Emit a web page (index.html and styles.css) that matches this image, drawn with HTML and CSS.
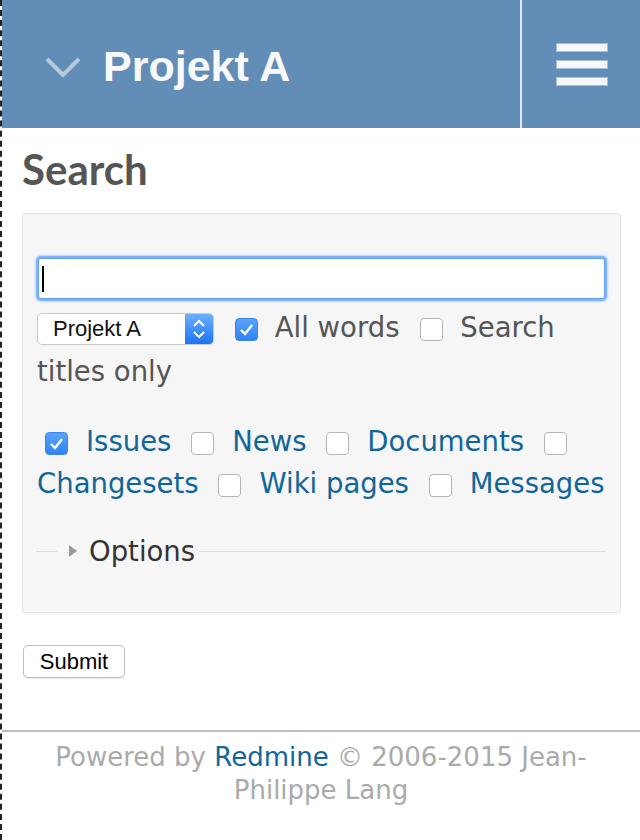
FILE: index.html
```html
<!DOCTYPE html>
<html lang="de">
<head>
<meta charset="utf-8">
<title>Search - Projekt A</title>
<link rel="stylesheet" href="styles.css">
</head>
<body>
<div class="page">
  <header class="topbar">
    <div class="project">
      <svg class="chevron" width="36" height="22" viewBox="0 0 36 22" aria-hidden="true">
        <polyline points="2,3 18,19 34,3" fill="none" stroke="#b7c9dc" stroke-width="4"/>
      </svg>
      <span class="project-name">Projekt A</span>
    </div>
    <div class="menu-toggle">
      <span class="bar"></span>
      <span class="bar"></span>
      <span class="bar"></span>
    </div>
  </header>

  <main class="content">
    <h2 class="title">Search</h2>
    <form class="search-box">
      <div class="query"><span class="caret"></span></div>
      <p class="scope"><span class="select"><span class="select-text">Projekt A</span><span class="select-arrows"><svg width="14" height="22" viewBox="0 0 14 22" aria-hidden="true"><polyline points="2,8 7,3 12,8" fill="none" stroke="#fff" stroke-width="2"/><polyline points="2,14 7,19 12,14" fill="none" stroke="#fff" stroke-width="2"/></svg></span></span> <span class="cb checked first"><svg width="15" height="13" viewBox="0 0 15 13" aria-hidden="true"><polyline points="2,7 6,11 13,2" fill="none" stroke="#fff" stroke-width="2.4"/></svg></span>All words <span class="cb"></span>Search titles only</p>
      <p class="types"><span class="cb checked first"><svg width="15" height="13" viewBox="0 0 15 13" aria-hidden="true"><polyline points="2,7 6,11 13,2" fill="none" stroke="#fff" stroke-width="2.4"/></svg></span><a class="type-link">Issues</a> <span class="cb"></span><a class="type-link">News</a> <span class="cb"></span><a class="type-link">Documents</a> <span class="cb"></span><a class="type-link">Changesets</a> <span class="cb"></span><a class="type-link">Wiki pages</a> <span class="cb"></span><a class="type-link">Messages</a></p>
      <div class="options">
        <span class="rule-start"></span>
        <span class="legend"><span class="triangle"></span>Options</span>
        <span class="rule-end"></span>
      </div>
    </form>
    <button class="submit" type="button">Submit</button>
  </main>

  <footer class="footer">
    <p class="footer-text">Powered by <a class="footer-link">Redmine</a> © 2006-2015 Jean-Philippe Lang</p>
  </footer>
</div>
</body>
</html>
```

FILE: styles.css
```css
html, body {
  margin: 0;
  padding: 0;
  background: #fff;
}

.page {
  min-height: 840px;
  border-left: 2px dashed #222;
  box-sizing: border-box;
  font-family: "DejaVu Sans", Verdana, sans-serif;
}

/* Header */
.topbar {
  display: flex;
  height: 128px;
  background: #628db6;
}

.project {
  flex: 1;
  display: flex;
  align-items: center;
  padding-left: 43px;
  border-right: 2px solid #dde6ef;
}

.chevron {
  display: block;
  margin-top: 5px;
}

.project-name {
  margin-left: 22px;
  margin-top: 5px;
  font-family: "Liberation Sans", Arial, sans-serif;
  font-weight: bold;
  font-size: 43px;
  color: #f8f9fb;
}

.menu-toggle {
  width: 116px;
  display: flex;
  flex-direction: column;
  align-items: center;
  justify-content: center;
  gap: 10px;
  padding-left: 2px;
}

.bar {
  display: block;
  width: 50px;
  height: 7px;
  background: #f7f8fa;
  box-shadow: 0 0 0 1px rgba(210, 222, 236, 0.6);
}

/* Content */
.content {
  padding: 0 19px 0 20px;
}

.title {
  margin: 0;
  padding-top: 21px;
  height: 85px;
  box-sizing: border-box;
  font-family: "Lato", "Open Sans", sans-serif;
  font-weight: bold;
  font-size: 42px;
  line-height: 40px;
  color: #555;
}

.search-box {
  margin: 0;
  background: #f6f6f6;
  border: 1px solid #e2e2e2;
  border-radius: 3px;
  padding: 44px 14px 46px 14px;
  font-size: 27.5px;
  color: #555;
}

.query {
  height: 41px;
  margin: 0 1px;
  box-sizing: border-box;
  background: #fff;
  border: 1px solid #5ea1f2;
  border-radius: 3px;
  box-shadow: 0 0 0 2px #80b4f5, 0 0 2px 3px rgba(150, 192, 246, 0.6);
  display: flex;
  align-items: center;
  padding-left: 3px;
}

.caret {
  display: block;
  width: 2px;
  height: 26px;
  background: #000;
}

.scope {
  margin: 6px 0 0 0;
  line-height: 44px;
}

.select {
  display: inline-flex;
  vertical-align: middle;
  width: 177px;
  height: 32px;
  box-sizing: border-box;
  border: 1px solid #c9c9c9;
  border-radius: 5px;
  background: #fff;
  overflow: hidden;
  font-family: "Liberation Sans", Arial, sans-serif;
  font-size: 22px;
  color: #111;
  line-height: 30px;
}

.select-text {
  flex: 1;
  padding-left: 15px;
}

.select-arrows {
  width: 28px;
  display: flex;
  align-items: center;
  justify-content: center;
  background: linear-gradient(#6db0fb, #1d73f6);
}

.cb {
  display: inline-block;
  width: 23px;
  height: 23px;
  box-sizing: border-box;
  margin: 0 18px 0 11px;
  vertical-align: -4px;
  border: 1px solid #b5b5b5;
  border-radius: 4px;
  background: #fff;
}

.cb svg {
  display: block;
  margin: 4px auto 0 auto;
}

.scope .cb {
  margin: 0 17px 0 12px;
}

.scope .cb.first {
  margin-left: 12px;
}

.cb.checked {
  border: 1px solid #3a88ef;
  background: linear-gradient(#5aa3f8, #2f84f4);
}

.types {
  margin: 27px 0 0 0;
  line-height: 42px;
}

.types .cb.first {
  margin-left: 8px;
}

.type-link {
  color: #169;
  text-decoration: none;
}

.options {
  display: flex;
  align-items: center;
  height: 30px;
  margin-top: 32px;
}

.rule-start {
  width: 21px;
  margin-left: -1px;
  border-top: 1px solid #dcdcdc;
}

.rule-end {
  flex: 1;
  border-top: 1px solid #dcdcdc;
  margin-left: 4px;
}

.legend {
  display: flex;
  align-items: center;
  padding-left: 12px;
  color: #333;
  line-height: 30px;
}

.triangle {
  width: 0;
  height: 0;
  border-top: 6px solid transparent;
  border-bottom: 6px solid transparent;
  border-left: 8px solid #9a9a9a;
  margin-right: 12px;
}

.submit {
  display: block;
  margin: 32px 0 0 1px;
  width: 102px;
  height: 33px;
  padding: 0;
  background: #fff;
  border: 1px solid #bdbdbd;
  border-radius: 5px;
  box-shadow: 0 1px 1px rgba(0, 0, 0, 0.08);
  font-family: "Liberation Sans", Arial, sans-serif;
  font-size: 22px;
  color: #000;
}

/* Footer */
.footer {
  margin-top: 52px;
  border-top: 2px solid #bdbdbd;
  padding: 9px 10px 0 10px;
}

.footer-text {
  margin: 0;
  text-align: center;
  font-size: 26px;
  line-height: 33px;
  color: #aaa;
}

.footer-link {
  color: #169;
  text-decoration: none;
}
```
